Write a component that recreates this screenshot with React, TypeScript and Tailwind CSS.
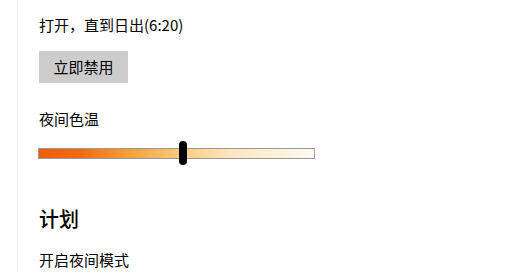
export default function App() {
  return (
    <div
      className="w-[505px] h-[280px] bg-white text-black overflow-hidden"
      style={{ fontFamily: '"Noto Sans CJK SC", "Noto Sans", sans-serif' }}
    >
      <div className="ml-[17px] h-[272px] border-l border-[#f2f2f2] pl-[21px] pt-[15px] flex flex-col items-start">
        <div className="text-[15px] leading-[20px]">打开，直到日出(6:20)</div>
        <button className="mt-[16px] w-[89px] h-[32px] bg-[#cccccc] text-[15px] leading-[20px] text-black flex items-center justify-center">
          立即禁用
        </button>
        <div className="mt-[26px] text-[15px] leading-[20px]">夜间色温</div>
        <div className="relative mt-[12px] w-[277px] h-[24px] -ml-[1px] flex items-center">
          <div className="w-full h-[11px] border border-[#9a9a9a] bg-[linear-gradient(to_right,#ef5c08_0%,#f26a10_15%,#f7a03a_33%,#fbcd7e_52%,#fde6c0_70%,#fffaf2_100%)]" />
          <div className="absolute left-[141px] top-0 w-[8px] h-[24px] rounded-full bg-black" />
        </div>
        <div className="mt-[40px] text-[20px] leading-[28px] font-medium">计划</div>
        <div className="mt-[17px] text-[15px] leading-[20px]">开启夜间模式</div>
      </div>
    </div>
  );
}
